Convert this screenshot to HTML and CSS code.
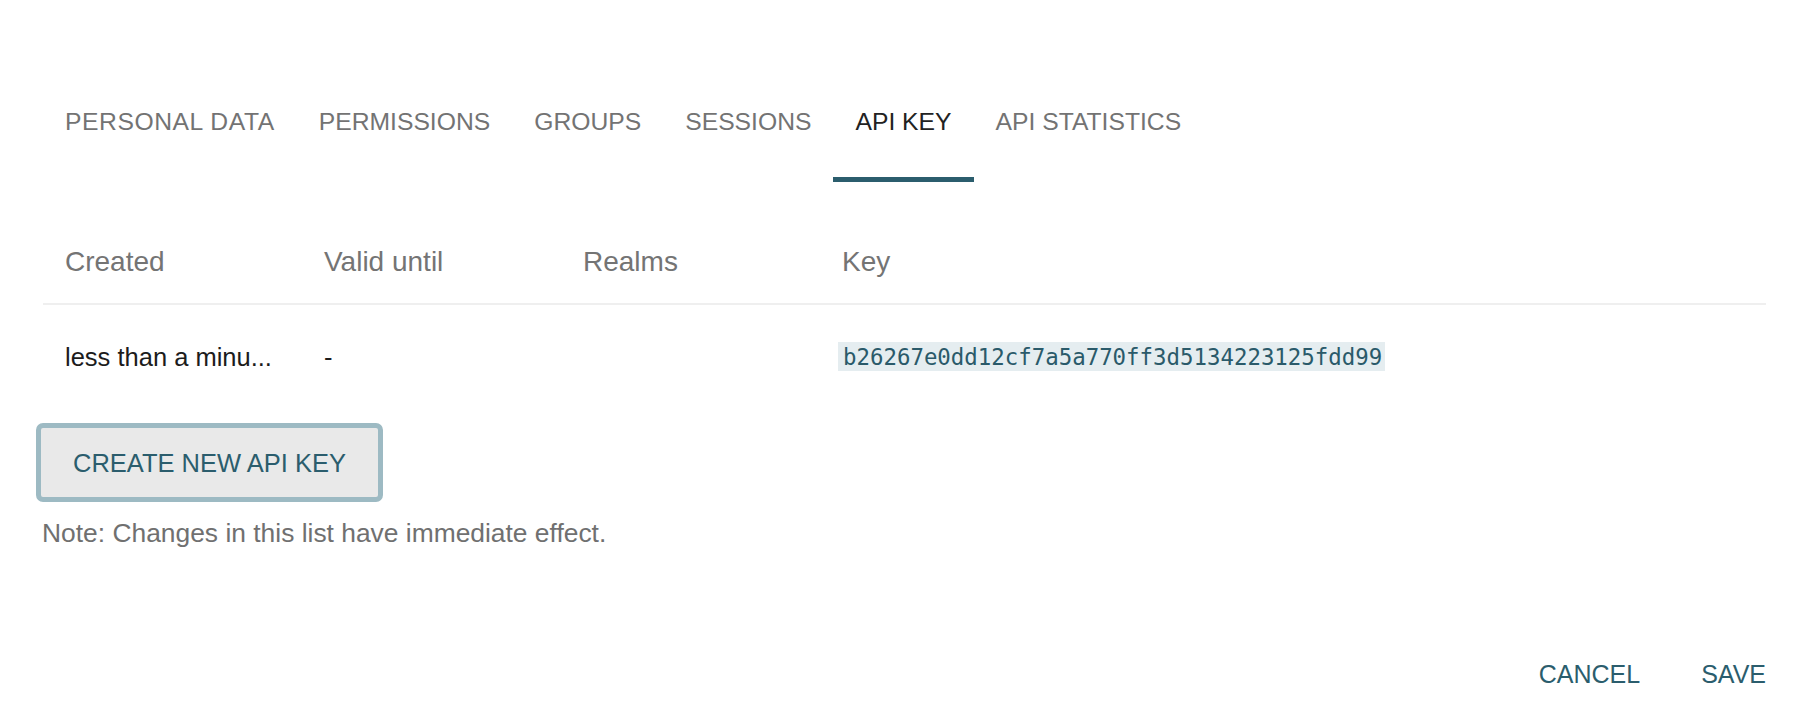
FILE: index.html
```html
<!DOCTYPE html>
<html lang="en">
<head>
<meta charset="utf-8">
<title>API Key</title>
<link rel="stylesheet" href="styles.css">
</head>
<body>
<div class="page">
  <nav class="tabs">
    <a class="tab">PERSONAL DATA</a>
    <a class="tab">PERMISSIONS</a>
    <a class="tab">GROUPS</a>
    <a class="tab">SESSIONS</a>
    <a class="tab active">API KEY</a>
    <a class="tab">API STATISTICS</a>
  </nav>

  <table class="keys">
    <colgroup>
      <col class="c-narrow"><col class="c-narrow"><col class="c-narrow"><col>
    </colgroup>
    <thead>
      <tr><th>Created</th><th>Valid until</th><th>Realms</th><th>Key</th></tr>
    </thead>
    <tbody>
      <tr>
        <td title="less than a minute ago">less than a minu...</td>
        <td>-</td>
        <td></td>
        <td><code class="key">b26267e0dd12cf7a5a770ff3d5134223125fdd99</code></td>
      </tr>
    </tbody>
  </table>

  <button class="create">CREATE NEW API KEY</button>
  <p class="note">Note: Changes in this list have immediate effect.</p>

  <footer class="actions">
    <button class="text-btn">CANCEL</button>
    <button class="text-btn">SAVE</button>
  </footer>
</div>
</body>
</html>
```

FILE: styles.css
```css
* { box-sizing: border-box; }
html, body { margin: 0; padding: 0; background: #ffffff; }
body {
  font-family: "Liberation Sans", Arial, sans-serif;
  color: #1c1c1c;
}
.page {
  min-height: 706px;
  display: flex;
  flex-direction: column;
  align-items: flex-start;
  padding: 60px 34px 17px 43px;
}
.tabs {
  display: flex;
}
.tab {
  font-size: 24.7px;
  line-height: 30px;
  color: #737373;
  padding: 47px 22px 40px;
  border-bottom: 5px solid transparent;
  white-space: nowrap;
}
.tab:first-child {
  letter-spacing: 0.55px;
}
.tab.active {
  color: #222222;
  border-bottom-color: #2b5d6d;
}
.keys {
  width: 100%;
  border-collapse: collapse;
  table-layout: fixed;
  margin-top: 40px;
}
.c-narrow { width: 259px; }
.keys th {
  text-align: left;
  font-weight: normal;
  font-size: 28px;
  line-height: 32px;
  color: #747474;
  padding: 24px 22px 25px;
  border-bottom: 2px solid #efefef;
}
.keys td {
  font-size: 25.5px;
  line-height: 30px;
  color: #1c1c1c;
  padding: 36px 22px 36px;
  white-space: nowrap;
}
.key {
  font-family: "DejaVu Sans Mono", "Liberation Mono", monospace;
  font-size: 22.4px;
  color: #2a5a6a;
  background: #e5edf0;
  padding: 2px 3px 1px 5px;
  margin-left: -4px;
}
.create {
  margin-top: 15px;
  margin-left: -7px;
  font-family: "Liberation Sans", Arial, sans-serif;
  font-size: 25.5px;
  line-height: 30px;
  color: #2b5d6d;
  background: #e9e9e9;
  border: 5px solid #9dbac3;
  border-radius: 7px;
  padding: 20px 32px 19px;
  cursor: pointer;
}
.note {
  margin: 16px 0 0 -1px;
  font-size: 26.4px;
  line-height: 30px;
  color: #707070;
}
.actions {
  margin-top: auto;
  align-self: flex-end;
  display: flex;
  gap: 61px;
}
.text-btn {
  font-family: "Liberation Sans", Arial, sans-serif;
  font-size: 25px;
  line-height: 30px;
  color: #2b5d6d;
  background: none;
  border: 0;
  padding: 0;
  cursor: pointer;
}
```
